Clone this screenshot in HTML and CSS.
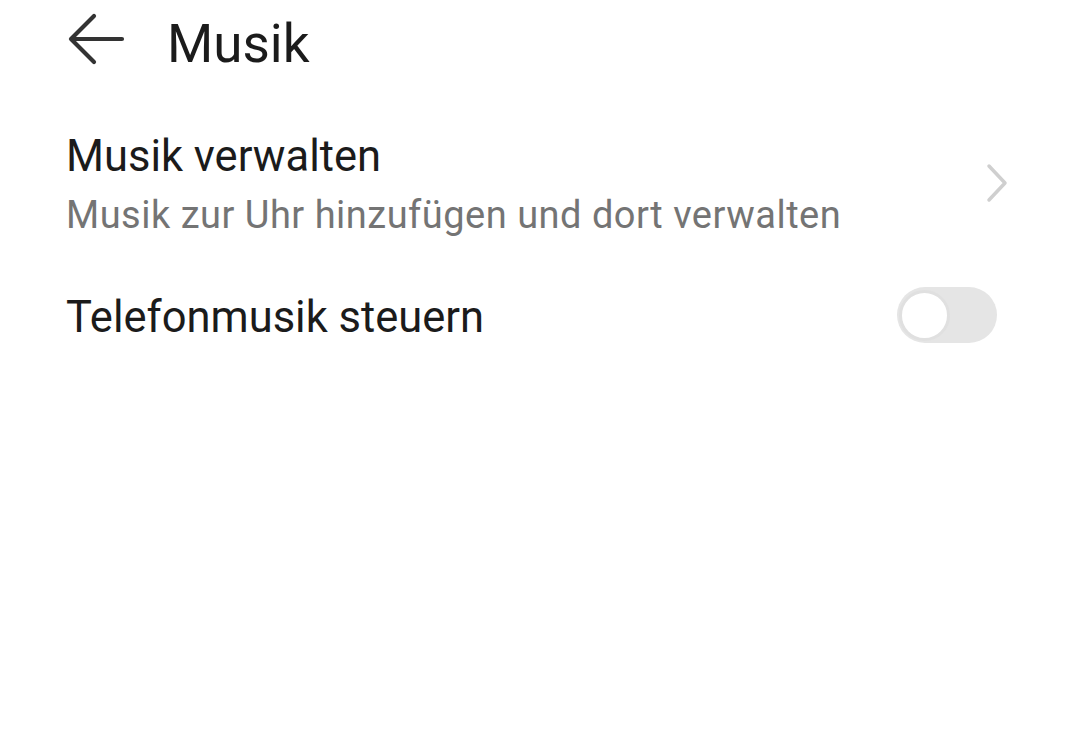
FILE: index.html
```html
<!DOCTYPE html>
<html lang="de">
<head>
<meta charset="utf-8">
<link rel="stylesheet" href="styles.css">
</head>
<body>
<div class="screen">
  <header class="header">
    <svg class="back" width="60" height="54" viewBox="0 0 60 54">
      <path d="M56 26 H5 M28 3 L5 26 L28 49" fill="none" stroke="#333" stroke-width="4.2" stroke-linecap="round" stroke-linejoin="round"/>
    </svg>
    <h1 class="title">Musik</h1>
  </header>
  <div class="row row-nav">
    <div class="texts">
      <div class="label">Musik verwalten</div>
      <div class="sub">Musik zur Uhr hinzufügen und dort verwalten</div>
    </div>
    <svg class="chevron" width="22" height="40" viewBox="0 0 22 40">
      <path d="M3 3 L19 20 L3 37" fill="none" stroke="#cfcfcf" stroke-width="3.5" stroke-linecap="round" stroke-linejoin="round"/>
    </svg>
  </div>
  <div class="row row-toggle">
    <div class="label">Telefonmusik steuern</div>
    <div class="switch"><div class="knob"></div></div>
  </div>
</div>
</body>
</html>
```
FILE: styles.css
```css
html, body {
  margin: 0;
  padding: 0;
  background: #ffffff;
}
body {
  font-family: Roboto, "Noto Sans", sans-serif;
  color: #1b1b1b;
}
.screen {
  width: 1079px;
  height: 743px;
  overflow: hidden;
}
.header {
  display: flex;
  align-items: flex-start;
  padding-top: 18px;
  padding-left: 66px;
}
.back {
  display: block;
  margin-top: -5px;
}
.title {
  margin: 0 0 0 41px;
  font-size: 53px;
  font-weight: 400;
  line-height: 53px;
}
.row {
  display: flex;
  align-items: center;
  justify-content: space-between;
  padding-left: 66px;
}
.row-nav {
  margin-top: 61px;
  padding-right: 71px;
}
.texts {
  display: flex;
  flex-direction: column;
}
.label {
  font-size: 43.5px;
  line-height: 50px;
  color: #1b1b1b;
}
.sub {
  font-size: 38px;
  letter-spacing: 0.5px;
  line-height: 44px;
  color: #747474;
  margin-top: 11px;
}
.chevron {
  display: block;
  margin-top: -4px;
}
.row-toggle {
  margin-top: 56px;
  padding-right: 82px;
}
.switch {
  width: 100px;
  height: 56px;
  border-radius: 28px;
  background: #e5e5e5;
  display: flex;
  align-items: center;
  padding-left: 2px;
  box-sizing: border-box;
  margin-top: -6px;
}
.knob {
  width: 51px;
  height: 51px;
  border-radius: 50%;
  background: #fff;
  box-sizing: border-box;
  border: 3px solid #e0e0e0;
}
```
